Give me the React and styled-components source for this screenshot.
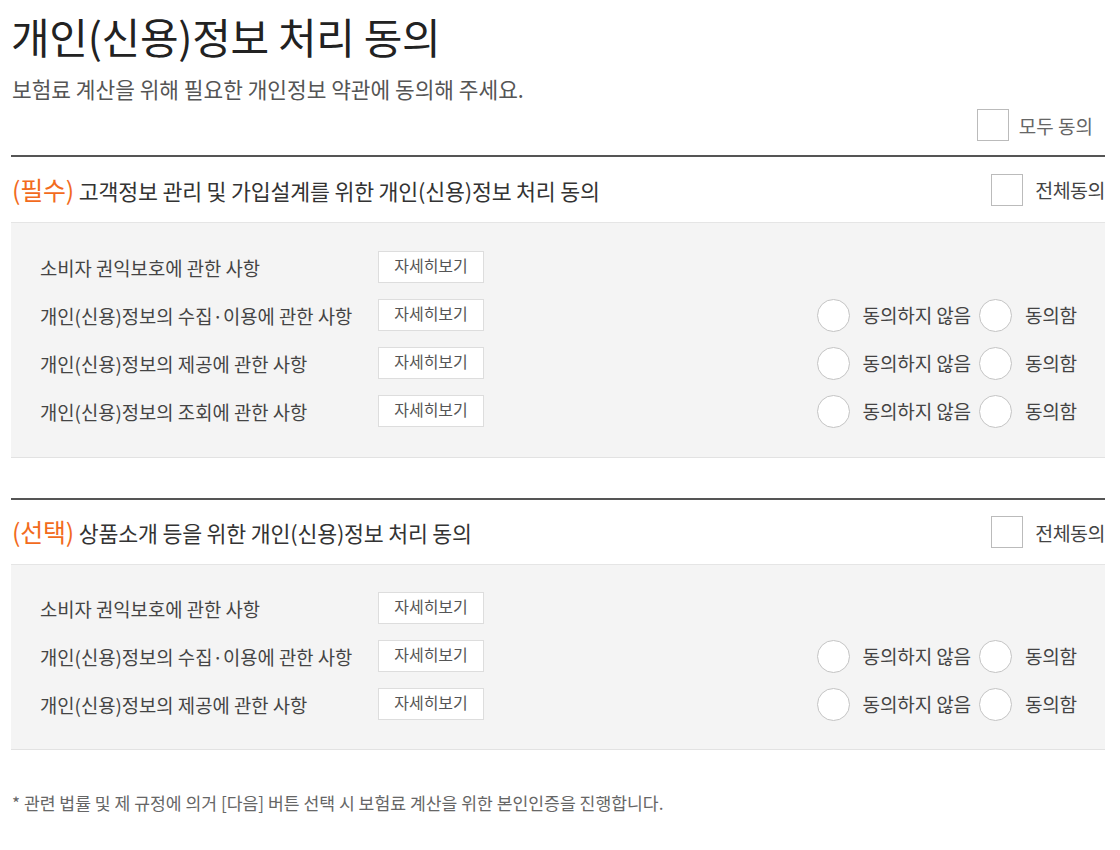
import React from "react";
import styled, { createGlobalStyle } from "styled-components";

const sections = [
    {
        tag: "(필수)",
        title: "고객정보 관리 및 가입설계를 위한 개인(신용)정보 처리 동의",
        items: [
            { label: "소비자 권익보호에 관한 사항", choice: false },
            { label: "개인(신용)정보의 수집·이용에 관한 사항", choice: true },
            { label: "개인(신용)정보의 제공에 관한 사항", choice: true },
            { label: "개인(신용)정보의 조회에 관한 사항", choice: true },
        ],
    },
    {
        tag: "(선택)",
        title: "상품소개 등을 위한 개인(신용)정보 처리 동의",
        items: [
            { label: "소비자 권익보호에 관한 사항", choice: false },
            { label: "개인(신용)정보의 수집·이용에 관한 사항", choice: true },
            { label: "개인(신용)정보의 제공에 관한 사항", choice: true },
        ],
    },
];

function App() {
    return (
        <Page>
            <GlobalStyle />
            <Title>개인(신용)정보 처리 동의</Title>
            <Subtitle>보험료 계산을 위해 필요한 개인정보 약관에 동의해 주세요.</Subtitle>

            <AllAgree>
                <CheckBox />
                <span>모두 동의</span>
            </AllAgree>

            {sections.map((section, i) => (
                <Section key={i}>
                    <SectionHeader>
                        <h3>
                            <Tag>{section.tag}</Tag> {section.title}
                        </h3>
                        <HeaderCheck>
                            <CheckBox />
                            <span>전체동의</span>
                        </HeaderCheck>
                    </SectionHeader>
                    <Panel>
                        {section.items.map((item, j) => (
                            <Row key={j}>
                                <Label>{item.label}</Label>
                                <DetailButton>자세히보기</DetailButton>
                                {item.choice && (
                                    <Choices>
                                        <Radio />
                                        <ChoiceText>동의하지 않음</ChoiceText>
                                        <Radio />
                                        <ChoiceText last>동의함</ChoiceText>
                                    </Choices>
                                )}
                            </Row>
                        ))}
                    </Panel>
                </Section>
            ))}

            <Notice>* 관련 법률 및 제 규정에 의거 [다음] 버튼 선택 시 보험료 계산을 위한 본인인증을 진행합니다.</Notice>
        </Page>
    );
}

export default App;

const GlobalStyle = createGlobalStyle`
    body {
        margin: 0;
        background: #FFFFFF;
        font-family: "Noto Sans CJK KR", "Noto Sans", sans-serif;
    }
`;

const Page = styled.div`
    width: 1094px;
    padding: 8px 0 0 11px;
`;

const Title = styled.h1`
    margin: 0;
    font-size: 42px;
    font-weight: 400;
    color: #222222;
    line-height: 56px;
    letter-spacing: -0.3px;
`;

const Subtitle = styled.p`
    margin: 10px 0 0 1px;
    font-size: 21.4px;
    color: #555555;
    line-height: 30px;
`;

const AllAgree = styled.div`
    display: flex;
    justify-content: flex-end;
    align-items: center;
    gap: 10px;
    margin-top: 5px;
    padding-right: 12px;

    span {
        font-size: 19px;
        color: #666666;
    }
`;

const CheckBox = styled.span`
    display: block;
    width: 30px;
    height: 30px;
    border: 1px solid #BBBBBB;
    background: #FFFFFF;
`;

const SectionHeader = styled.div`
    height: 65px;
    border-top: 2px solid #555555;
    border-bottom: 1px solid #E5E5E5;
    display: flex;
    align-items: center;
    justify-content: space-between;

    h3 {
        margin: 0 0 2px 1px;
        font-size: 21.7px;
        font-weight: 400;
        color: #333333;
        letter-spacing: -0.2px;
    }
`;

const Panel = styled.div`
    background: #F4F4F4;
    border-bottom: 1px solid #E2E2E2;
    padding: 20px 28px 22px 29px;
`;

const Section = styled.section`
    margin-top: 14px;

    & + & {
        margin-top: 40px;
    }

    & + & ${SectionHeader} {
        height: 64px;
    }

    & + & ${Panel} {
        padding-top: 19px;
        padding-bottom: 21px;
    }
`;

const Tag = styled.span`
    color: #F26B1D;
    font-size: 25px;
`;

const HeaderCheck = styled.div`
    display: flex;
    align-items: center;
    gap: 12px;

    span {
        font-size: 19.5px;
        color: #444444;
        letter-spacing: -0.5px;
    }
`;

const Row = styled.div`
    height: 48px;
    display: flex;
    align-items: center;
`;

const Label = styled.span`
    width: 338px;
    font-size: 18.8px;
    color: #444444;
`;

const DetailButton = styled.span`
    width: 104px;
    height: 30px;
    border: 1px solid #DDDDDD;
    background: #FFFFFF;
    display: flex;
    justify-content: center;
    align-items: flex-start;
    line-height: 26px;
    font-size: 16px;
    color: #555555;
`;

const Choices = styled.div`
    margin-left: auto;
    display: flex;
    align-items: center;
`;

const Radio = styled.span`
    width: 31px;
    height: 31px;
    border: 1px solid #C4C4C4;
    border-radius: 50%;
    background: #FFFFFF;
`;

const ChoiceText = styled.span`
    font-size: 19.1px;
    color: #444444;
    letter-spacing: -0.2px;
    margin-left: 13px;
    margin-right: ${props => props.last ? "0" : "8px"};
`;

const Notice = styled.p`
    margin: 40px 0 0 1px;
    font-size: 17.2px;
    color: #666666;
`;
